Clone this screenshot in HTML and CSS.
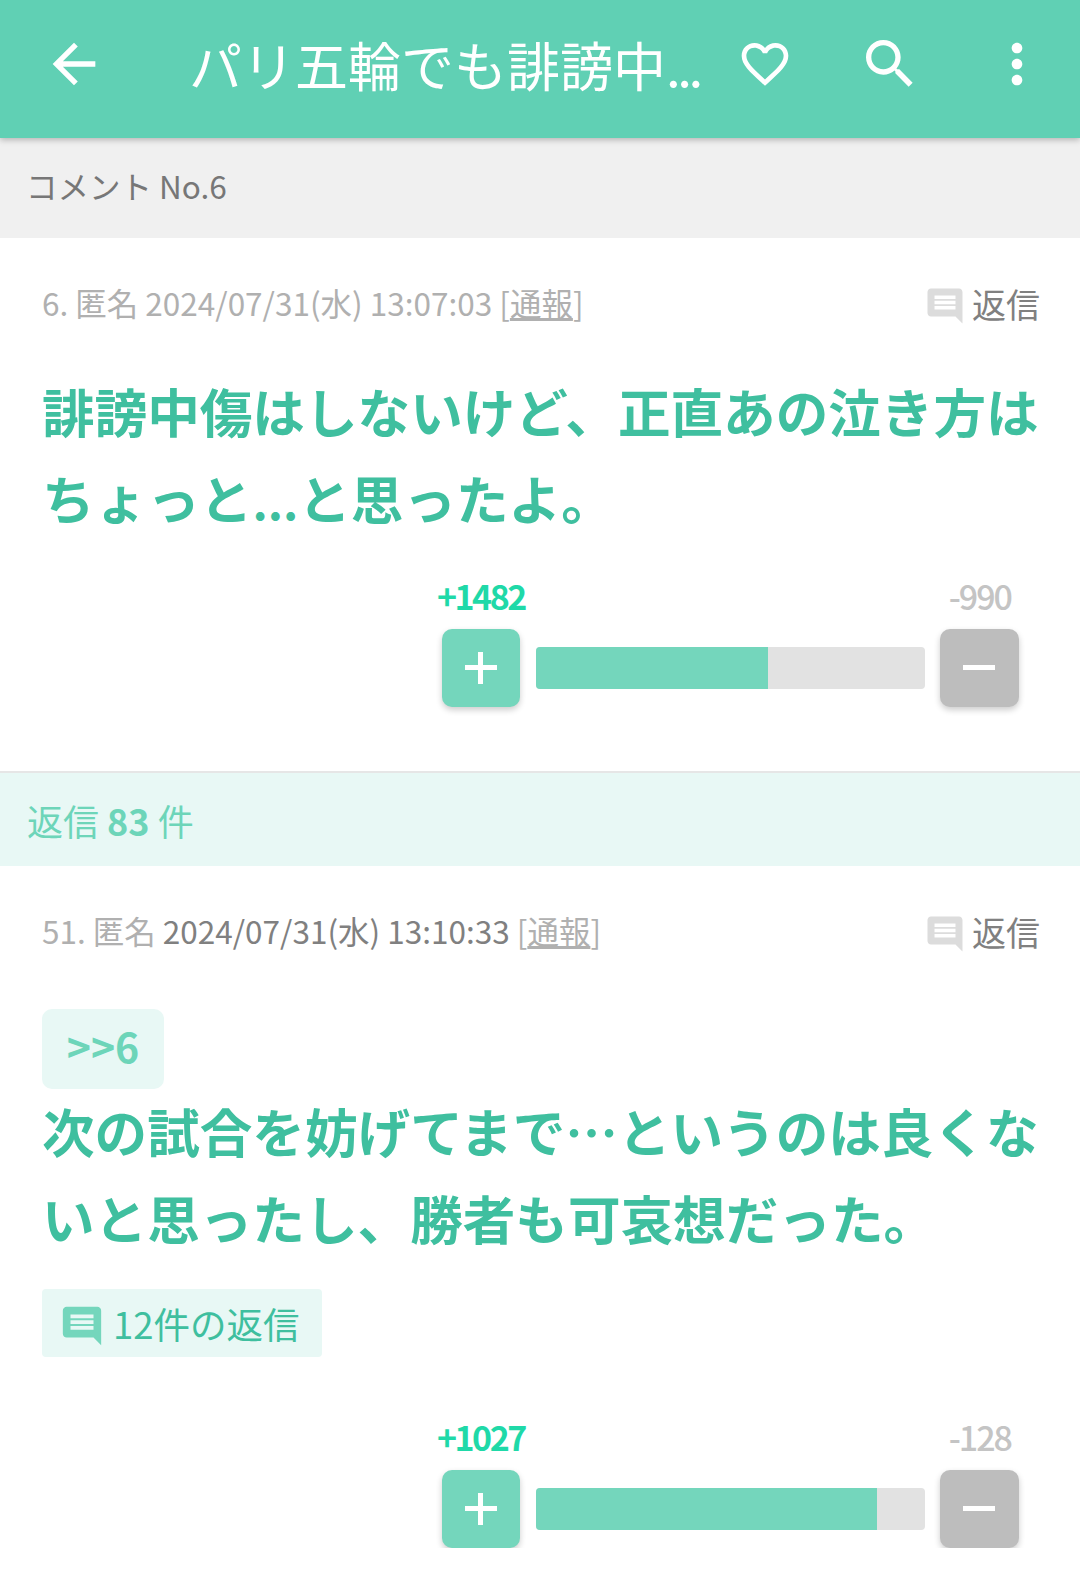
FILE: index.html
```html
<!DOCTYPE html>
<html lang="ja">
<head>
    <meta charset="UTF-8">
    <title>パリ五輪でも誹謗中傷</title>
    <link rel="stylesheet" href="styles.css">
</head>
<body>
    <header class="appbar">
        <svg class="appbar-back" width="64" height="64" viewBox="0 0 24 24"><path d="M20 11H7.830l5.590-5.590L12 4l-8 8 8 8 1.410-1.410L7.830 13H20z"/></svg>
        <div class="appbar-title">パリ五輪でも誹謗中<span class="dots">...</span></div>
        <svg class="appbar-heart" width="56" height="56" viewBox="0 0 24 24"><path d="M16.500 3c-1.740 0-3.410.81-4.500 2.090C10.910 3.810 9.240 3 7.500 3 4.420 3 2 5.420 2 8.500c0 3.780 3.400 6.860 8.550 11.540L12 21.350l1.450-1.320C18.600 15.360 22 12.280 22 8.500 22 5.420 19.580 3 16.500 3zm-4.400 15.550l-.1.100-.1-.1C7.140 14.240 4 11.390 4 8.500 4 6.500 5.500 5 7.500 5c1.540 0 3.040.99 3.570 2.360h1.870C13.460 5.990 14.960 5 16.500 5c2 0 3.500 1.500 3.500 3.500 0 2.890-3.140 5.740-7.900 10.050z"/></svg>
        <svg class="appbar-search" width="64" height="64" viewBox="0 0 24 24"><path d="M15.500 14h-.79l-.28-.27C15.410 12.590 16 11.110 16 9.500 16 5.910 13.090 3 9.500 3S3 5.910 3 9.500 5.910 16 9.500 16c1.610 0 3.090-.59 4.230-1.570l.27.28v.79l5 4.990L20.490 19l-4.990-5zm-6 0C7.010 14 5 11.990 5 9.500S7.010 5 9.500 5 14 7.010 14 9.500 11.990 14 9.500 14z"/></svg>
        <svg class="appbar-more" width="64" height="64" viewBox="0 0 24 24"><path d="M12 8c1.100 0 2-.9 2-2s-.9-2-2-2-2 .9-2 2 .9 2 2 2zm0 2c-1.100 0-2 .9-2 2s.9 2 2 2 2-.9 2-2-.9-2-2-2zm0 6c-1.100 0-2 .9-2 2s.9 2 2 2 2-.9 2-2-.9-2-2-2z"/></svg>
    </header>

    <div class="band band-grey">コメント No.6</div>

    <section class="comment comment-first">
        <div class="meta">
            <span class="meta-info">6. 匿名 2024/07/31(水) 13:07:03 [<u>通報</u>]</span>
            <span class="reply-link">
                <svg class="bubble" width="42" height="42" viewBox="0 0 24 24"><path d="M21.990 4c0-1.100-.89-2-1.990-2H4c-1.100 0-2 .9-2 2v12c0 1.100.9 2 2 2h14l4 4-.01-18zM18 14H6v-2h12v2zm0-3H6V9h12v2zm0-3H6V6h12v2z"/></svg>
                返信
            </span>
        </div>
        <p class="body-text"><span class="body-line">誹謗中傷はしないけど、正直あの泣き方は</span><span class="body-line">ちょっと<span class="body-dots">...</span>と思ったよ。</span></p>
        <div class="vote">
            <div class="vote-counts">
                <span class="count-plus">+1482</span>
                <span class="count-minus">-990</span>
            </div>
            <div class="vote-row">
                <div class="vote-btn vote-plus"><span class="sign-h"></span><span class="sign-v"></span></div>
                <div class="bar"><div class="bar-fill" style="width:59.7%"></div></div>
                <div class="vote-btn vote-minus"><span class="sign-h"></span></div>
            </div>
        </div>
    </section>

    <div class="band band-green">返信 <b>83</b> 件</div>

    <section class="comment">
        <div class="meta">
            <span class="meta-info">51. 匿名 <span class="meta-date">2024/07/31(水) 13:10:33</span> [<u>通報</u>]</span>
            <span class="reply-link">
                <svg class="bubble" width="42" height="42" viewBox="0 0 24 24"><path d="M21.990 4c0-1.100-.89-2-1.990-2H4c-1.100 0-2 .9-2 2v12c0 1.100.9 2 2 2h14l4 4-.01-18zM18 14H6v-2h12v2zm0-3H6V9h12v2zm0-3H6V6h12v2z"/></svg>
                返信
            </span>
        </div>
        <div class="quote">&gt;&gt;6</div>
        <p class="body-text body-quoted">次の試合を妨げてまで…というのは良くないと思ったし、勝者も可哀想だった。</p>
        <div class="replies">
            <svg class="bubble" width="46" height="46" viewBox="0 0 24 24"><path d="M21.990 4c0-1.100-.89-2-1.990-2H4c-1.100 0-2 .9-2 2v12c0 1.100.9 2 2 2h14l4 4-.01-18zM18 14H6v-2h12v2zm0-3H6V9h12v2zm0-3H6V6h12v2z"/></svg>
            12件の返信
        </div>
        <div class="vote vote-last">
            <div class="vote-counts">
                <span class="count-plus">+1027</span>
                <span class="count-minus">-128</span>
            </div>
            <div class="vote-row">
                <div class="vote-btn vote-plus"><span class="sign-h"></span><span class="sign-v"></span></div>
                <div class="bar"><div class="bar-fill" style="width:87.7%"></div></div>
                <div class="vote-btn vote-minus"><span class="sign-h"></span></div>
            </div>
        </div>
    </section>
</body>
</html>
```

FILE: styles.css
```css
body {
    margin: 0;
    background: #fff;
    font-family: "Noto Sans CJK JP", "Noto Sans", sans-serif;
    overflow: hidden;
}
.appbar {
    height: 138px;
    box-sizing: border-box;
    padding-bottom: 10px;
    background: #60d0b4;
    display: flex;
    align-items: center;
    position: relative;
    box-shadow: 0 2px 6px rgba(0,0,0,0.25);
}
.appbar svg {
    fill: #fff;
    flex: none;
}
.appbar-back {
    margin-left: 42px;
}
.appbar-title {
    margin-left: 83px;
    width: 548px;
    color: #fff;
    font-size: 53px;
    line-height: 60px;
    white-space: nowrap;
}
.dots {
    letter-spacing: -3.5px;
}
.appbar-search {
    margin-left: 65px;
}
.appbar-more {
    margin-left: 63px;
}
.band {
    display: flex;
    align-items: center;
    white-space: pre;
}
.band-grey {
    height: 100px;
    box-sizing: border-box;
    padding: 0 0 6px 26px;
    background: #f0f0f0;
    color: #777;
    font-size: 31.5px;
}
.band-green {
    height: 93px;
    padding-left: 27px;
    background: #e8f8f5;
    color: #6dd5b9;
    border-top: 2px solid #e6e6e6;
    font-size: 36px;
}
.band-green b {
    font-weight: 700;
}
.comment {
    padding: 38px 40px 0 42px;
}
.comment-first {
    height: 533px;
    box-sizing: border-box;
}
.meta {
    display: flex;
    justify-content: space-between;
    align-items: center;
    height: 52px;
}
.meta-info {
    color: #b0b0b0;
    font-size: 31.5px;
    white-space: pre;
}
.meta-date {
    color: #808080;
}
.reply-link {
    display: flex;
    align-items: center;
    gap: 6px;
    color: #808080;
    font-size: 34px;
    padding-top: 2px;
}
.bubble {
    fill: #dcdcdc;
    margin-top: 6px;
}
.body-text {
    margin: 39px 0 0;
    color: #3fbf9f;
    font-size: 52.6px;
    line-height: 87px;
    font-weight: 700;
}
.body-line {
    display: block;
}
.body-dots {
    font-size: 47px;
    line-height: 1;
}
.body-quoted {
    margin-top: -2px;
}
.quote {
    margin-top: 53px;
    width: 122px;
    height: 80px;
    box-sizing: border-box;
    padding-bottom: 8px;
    border-radius: 10px;
    background: #e8f8f5;
    color: #6dd5b9;
    font-size: 41px;
    font-weight: 700;
    display: flex;
    align-items: center;
    justify-content: center;
}
.replies {
    margin-top: 28px;
    width: 280px;
    height: 68px;
    box-sizing: border-box;
    padding-left: 17px;
    border-radius: 4px;
    background: #e8f8f5;
    color: #3fbf9f;
    font-size: 36.5px;
    display: flex;
    align-items: center;
    gap: 8px;
}
.replies .bubble {
    fill: #74d6bc;
}
.vote {
    width: 577px;
    margin: 31px 21px 0 auto;
}
.vote-last {
    margin-top: 56px;
}
.vote-counts {
    display: flex;
    justify-content: space-between;
    padding: 0 8px 0 0;
    height: 48px;
    font-size: 34px;
    line-height: 48px;
    font-weight: 700;
    letter-spacing: -2.5px;
}
.count-plus {
    color: #1fd9a8;
    margin-left: -5px;
}
.count-minus {
    color: #c4c4c4;
    font-weight: 500;
    letter-spacing: -2px;
}
.vote-row {
    display: flex;
    align-items: center;
    gap: 16px;
    margin-top: 9px;
}
.vote-btn {
    flex: none;
    width: 78px;
    height: 78px;
    border-radius: 10px;
    position: relative;
    box-shadow: 0 3px 6px rgba(0,0,0,0.2);
}
.vote-plus {
    background: #74d6bc;
}
.vote-minus {
    background: #bdbdbd;
    width: 79px;
    margin-left: -1px;
}
.sign-h {
    position: absolute;
    left: 23px;
    top: 36px;
    width: 32px;
    height: 5px;
    background: #fff;
}
.sign-v {
    position: absolute;
    left: 36px;
    top: 23px;
    width: 5px;
    height: 32px;
    background: #fff;
}
.bar {
    flex: 1;
    height: 42px;
    border-radius: 4px;
    background: #e2e2e2;
    overflow: hidden;
}
.bar-fill {
    height: 100%;
    background: #74d6bc;
}
```
